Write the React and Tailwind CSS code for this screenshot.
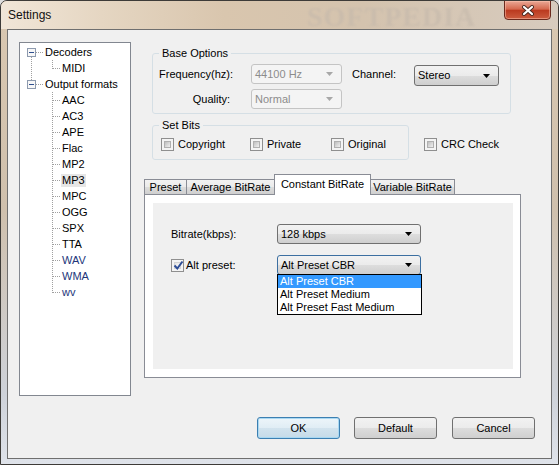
import React from 'react';

const btnGrad = 'bg-[linear-gradient(#f2f2f2_0%,#ebebeb_50%,#dddddd_51%,#cfcfcf_100%)]';

const Arrow = ({ color = '#000' }) => (
  <svg width="7" height="4" viewBox="0 0 7 4" className="flex-none">
    <path d="M0 0h7L3.5 4z" fill={color} />
  </svg>
);

function Combo({ value, className = '', disabled = false, focused = false }) {
  const look = disabled
    ? 'border-[#c4c4c4] bg-[#f4f4f4] text-[#8c8c8c]'
    : focused
    ? `border-[#3c6fa1] ${btnGrad}`
    : `border-[#707070] ${btnGrad}`;
  return (
    <div className={`flex flex-none items-center justify-between rounded-[3px] border pl-[3px] pr-[8px] ${look} ${className}`}>
      <span>{value}</span>
      <Arrow color={disabled ? '#a8a8a8' : '#000'} />
    </div>
  );
}

function Check({ checked = false }) {
  return (
    <span className="relative flex-none w-[13px] h-[13px] border border-[#8f8f8f] bg-[#f4f4f4] p-[2px]">
      <span
        className={`block w-full h-full border ${
          checked
            ? 'border-[#d4d4d4] bg-[linear-gradient(135deg,#e4e4e4,#fbfbfb)]'
            : 'border-[#b0b0b0] bg-[linear-gradient(135deg,#bfbfbf,#f0f0f0)]'
        }`}
      />
      {checked && (
        <svg className="absolute left-[1px] top-0" width="11" height="11" viewBox="0 0 11 11">
          <path d="M1.5 5.5L4.3 8.5L9.5 1.5" stroke="#2d4d96" strokeWidth="2" fill="none" />
        </svg>
      )}
    </span>
  );
}

function Tab({ label, className = '' }) {
  return (
    <div
      className={`-ml-px first:ml-0 h-[15px] flex items-center justify-center border border-b-0 border-[#898c95] ${btnGrad} ${className}`}
    >
      {label}
    </div>
  );
}

const outputs = ['AAC', 'AC3', 'APE', 'Flac', 'MP2', 'MP3', 'MPC', 'OGG', 'SPX', 'TTA', 'WAV', 'WMA', 'wv'];

function TreeLines() {
  const dots = { stroke: '#a0a0a0', strokeWidth: 1, strokeDasharray: '1 1' };
  return (
    <svg className="absolute left-0 top-0" width="110" height="352" shapeRendering="crispEdges">
      <line x1="11.5" y1="14" x2="11.5" y2="37" {...dots} />
      <line x1="16" y1="9.5" x2="23" y2="9.5" {...dots} />
      <line x1="16" y1="41.5" x2="23" y2="41.5" {...dots} />
      <line x1="32.5" y1="17" x2="32.5" y2="26" {...dots} />
      <line x1="33" y1="25.5" x2="40" y2="25.5" {...dots} />
      <line x1="32.5" y1="49" x2="32.5" y2="250" {...dots} />
      {outputs.map((o, i) => (
        <line key={o} x1="33" y1={57.5 + 16 * i} x2="40" y2={57.5 + 16 * i} {...dots} />
      ))}
      {[5, 37].map((y) => (
        <g key={y}>
          <rect x="7.5" y={y + 0.5} width="8" height="8" fill="#f7f7f7" stroke="#8d9aae" />
          <rect x="9" y={y + 4} width="5" height="1" fill="#2f4f8f" />
        </g>
      ))}
    </svg>
  );
}

function Tree() {
  const Row = ({ label, child, sel, blue }) => (
    <div className={`h-[16px] flex items-center ${child ? 'pl-[42px]' : 'pl-[25px]'}`}>
      <span className={`${sel ? 'bg-[#e6e6e6] -ml-px px-px' : ''} ${blue ? 'text-[#22357a]' : ''}`}>{label}</span>
    </div>
  );
  return (
    <div className="relative flex-none w-[112px] h-[354px] border border-[#828790] bg-white pt-px">
      <TreeLines />
      <div className="relative">
        <Row label="Decoders" />
        <Row label="MIDI" child />
        <Row label="Output formats" />
        {outputs.map((o) => (
          <Row key={o} label={o} child sel={o === 'MP3'} blue={['WAV', 'WMA', 'wv'].includes(o)} />
        ))}
      </div>
    </div>
  );
}

function Button({ label, primary }) {
  return (
    <div
      className={`w-[83px] h-[22px] flex items-center justify-center rounded-[3px] border ${
        primary
          ? 'border-[#3c7fb1] shadow-[inset_0_0_0_1px_#a9d8f2] bg-[linear-gradient(#edf5fa_0%,#e0edf5_50%,#d2e3ee_51%,#c6dbe8_100%)]'
          : `border-[#707070] ${btnGrad}`
      }`}
    >
      {label}
    </div>
  );
}

export default function App() {
  return (
    <div className="w-[559px] h-[465px] bg-[#dedede] font-['Liberation_Sans',Arial,sans-serif] text-[11px] leading-[13px] text-black">
      <div className="relative w-full h-full flex flex-col border border-[#3d3b38] rounded-t-[7px] overflow-hidden bg-[linear-gradient(180deg,#dac8b1_0%,#cfc0ad_45%,#ced2d9_85%,#dfe3ea_100%)]">
        <div className="relative h-[28px] flex-none flex items-center pl-[7px] bg-[linear-gradient(90deg,#f1e6d8_0%,#e5d6c2_18%,#d9c6ae_40%,#d4c3ae_65%,#d7cbbe_100%)]">
          <span className="text-[12px] leading-[14px] text-[#111]">Settings</span>
          <span className="absolute left-[306px] top-[1px] font-['Liberation_Serif',serif] font-bold text-[28px] leading-[30px] tracking-[1px] text-[#c4b8ab] opacity-60 blur-[1px]">
            SOFTPEDIA
          </span>
          <div className="absolute -top-px right-[7px] w-[47px] h-[20px] flex items-center justify-center rounded-b-[4px] border border-[#6b2a1e] bg-[linear-gradient(#eaa896_0%,#d5694f_45%,#bb3a20_52%,#cc5c3f_100%)] shadow-[inset_0_0_0_1px_rgba(255,200,180,0.5)]">
            <svg width="14" height="11" viewBox="0 0 14 11">
              <path d="M3 2L11 9M11 2L3 9" stroke="#4a2a22" strokeWidth="4" strokeLinecap="round" />
              <path d="M3 2L11 9M11 2L3 9" stroke="#fff" strokeWidth="2.2" strokeLinecap="round" />
            </svg>
          </div>
        </div>

        <div className="flex-1 mx-[6px] mb-[5px] border border-[#6f6f6f] bg-[#f0f0f0] flex flex-col pl-[11px] pt-[12px] pr-[16px]">
          <div className="flex gap-[13px]">
            <Tree />

            <div className="flex flex-col w-[377px]">
              <fieldset className="mt-[5px] ml-[8px] w-[359px] rounded-[3px] border border-[#d5dfe5] px-[6px] pt-[4px] pb-[4px]">
                <legend className="px-[3px]">Base Options</legend>
                <div className="flex items-start h-[21px]">
                  <div className="w-[74px] h-[20px] flex items-center justify-end">Frequency(hz):</div>
                  <Combo value="44100 Hz" disabled className="ml-[18px] w-[91px] h-[20px]" />
                  <div className="ml-[10px] w-[62px] h-[20px] flex items-center">Channel:</div>
                  <Combo value="Stereo" className="mt-px w-[85px] h-[21px]" />
                </div>
                <div className="flex items-start mt-[4px] h-[20px]">
                  <div className="w-[71px] h-[20px] flex items-center justify-end">Quality:</div>
                  <Combo value="Normal" disabled className="ml-[21px] w-[91px] h-[20px]" />
                </div>
              </fieldset>

              <div className="flex items-start">
                <fieldset className="mt-[5px] ml-[8px] w-[257px] rounded-[3px] border border-[#d5dfe5] px-[6px] pt-[5px] pb-[8px]">
                  <legend className="px-[3px]">Set Bits</legend>
                  <div className="flex items-center h-[14px] pl-[2px]">
                    <div className="w-[89px] flex items-center gap-[4px]"><Check />Copyright</div>
                    <div className="w-[81px] flex items-center gap-[4px]"><Check />Private</div>
                    <div className="flex items-center gap-[4px]"><Check />Original</div>
                  </div>
                </fieldset>
                <div className="mt-[23px] ml-[15px] h-[14px] flex items-center gap-[4px]">
                  <Check />CRC Check
                </div>
              </div>

              <div className="mt-[14px] flex items-end h-[20px]">
                <Tab label="Preset" className="w-[43px]" />
                <Tab label="Average BitRate" className="w-[89px]" />
                <div className="-ml-px relative z-10 -mb-px w-[97px] h-[21px] flex justify-center pt-[3px] border border-b-0 border-[#898c95] bg-white">
                  Constant BitRate
                </div>
                <Tab label="Variable BitRate" className="w-[85px]" />
              </div>
              <div className="h-[184px] border border-[#898c95] bg-white pt-[8px] pl-[8px] pr-[7px] pb-[8px]">
                <div className="relative h-full bg-[#f0f0f0] pt-[21px] pl-[18px]">
                  <div className="flex items-center">
                    <div className="w-[106px]">Bitrate(kbps):</div>
                    <Combo value="128 kbps" className="w-[144px] h-[20px]" />
                  </div>
                  <div className="flex items-center mt-[11px]">
                    <div className="w-[106px] flex items-center gap-[2px]">
                      <Check checked />Alt preset:
                    </div>
                    <Combo value="Alt Preset CBR" focused className="w-[144px] h-[20px]" />
                  </div>
                  <div className="absolute left-[124px] top-[71px] w-[145px] border border-black bg-white">
                    <div className="h-[13px] flex items-center pl-[2px] bg-[#3399ff] text-white">Alt Preset CBR</div>
                    <div className="h-[13px] flex items-center pl-[2px]">Alt Preset Medium</div>
                    <div className="h-[13px] flex items-center pl-[2px]">Alt Preset Fast Medium</div>
                  </div>
                </div>
              </div>
            </div>
          </div>

          <div className="mt-[21px] flex justify-end">
            <Button label="OK" primary />
            <div className="ml-[14px]"><Button label="Default" /></div>
            <div className="ml-[15px]"><Button label="Cancel" /></div>
          </div>
        </div>
      </div>
    </div>
  );
}
